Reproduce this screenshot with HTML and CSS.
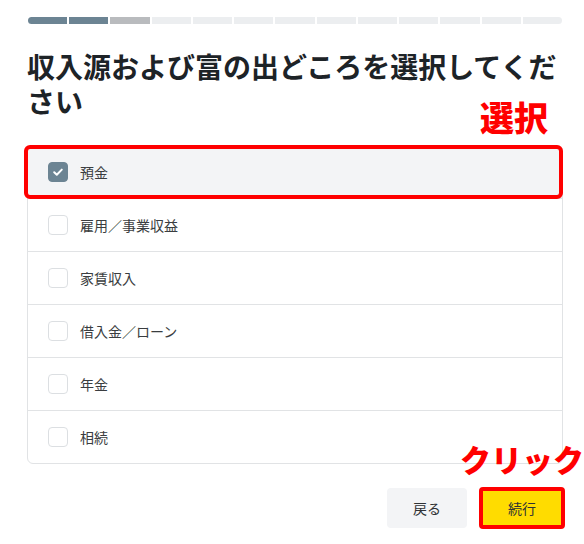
FILE: index.html
```html
<!DOCTYPE html>
<html lang="ja">
<head>
<meta charset="utf-8">
<link rel="stylesheet" href="styles.css">
</head>
<body>
<div class="page">
  <div class="progress">
    <span class="seg done"></span><span class="seg done"></span><span class="seg current"></span><span class="seg"></span><span class="seg"></span><span class="seg"></span><span class="seg"></span><span class="seg"></span><span class="seg"></span><span class="seg"></span><span class="seg"></span><span class="seg"></span><span class="seg"></span>
  </div>
  <h1 class="title">収入源および富の出どころを選択してください</h1>
  <div class="list">
    <label class="row selected">
      <span class="box checked"><svg viewBox="0 0 20 20" width="20" height="20"><path d="M6.2 10.2 L8.8 12.7 L13.8 7.6" fill="none" stroke="#fff" stroke-width="2" stroke-linecap="round" stroke-linejoin="round"/></svg></span>
      <span class="label">預金</span>
    </label>
    <label class="row"><span class="box"></span><span class="label">雇用／事業収益</span></label>
    <label class="row"><span class="box"></span><span class="label">家賃収入</span></label>
    <label class="row"><span class="box"></span><span class="label">借入金／ローン</span></label>
    <label class="row"><span class="box"></span><span class="label">年金</span></label>
    <label class="row"><span class="box"></span><span class="label">相続</span></label>
    <div class="mark mark-row"></div>
  </div>
  <div class="actions">
    <button class="btn back">戻る</button>
    <div class="next-wrap">
      <button class="btn next">続行</button>
      <div class="mark mark-btn"></div>
    </div>
  </div>
  <div class="note note-select">選択</div>
  <div class="note note-click">クリック</div>
</div>
</body>
</html>
```
FILE: styles.css
```css
html, body {
  margin: 0;
  padding: 0;
  background: #ffffff;
}
body {
  font-family: "Noto Sans CJK JP", "Noto Sans", sans-serif;
  color: #2b2f33;
}
.page {
  position: relative;
  width: 584px;
  height: 544px;
  padding: 17px 0 0 27px;
  box-sizing: border-box;
}
.progress {
  display: flex;
  gap: 2px;
  width: 534px;
  margin-left: 1px;
  height: 7px;
  border-radius: 4px;
  overflow: hidden;
}
.seg {
  flex: 1;
  background: #eceef0;
}
.seg.done { background: #6c8493; }
.seg.current { background: #b9bbbe; }
.title {
  margin: 25px 0 0 0;
  width: 536px;
  font-size: 28px;
  line-height: 35px;
  font-weight: 700;
  color: #1d2327;
  letter-spacing: 0;
}
.list {
  position: relative;
  margin-top: 26px;
  width: 536px;
  box-sizing: border-box;
  border: 1px solid #e1e3e5;
  border-radius: 6px;
}
.row {
  display: flex;
  align-items: center;
  gap: 12px;
  height: 52px;
  padding-left: 20px;
  border-top: 1px solid #e1e3e5;
  font-size: 14px;
  color: #3a3d40;
}
.row:first-child { border-top: none; }
.row.selected { background: #f3f4f6; border-radius: 5px 5px 0 0; }
.box {
  width: 20px;
  height: 20px;
  box-sizing: border-box;
  border: 1px solid #dcdfe2;
  border-radius: 4px;
  background: #fff;
  display: flex;
}
.box.checked {
  background: #6c8493;
  border-color: #6c8493;
}
.box.checked svg { margin: -1px; }
.label { line-height: 20px; }
.mark {
  position: absolute;
  border: 4px solid #ff0000;
  border-radius: 6px;
  box-sizing: border-box;
  pointer-events: none;
}
.mark-row {
  left: -4px;
  top: -1px;
  right: -1px;
  height: 54px;
}
.actions {
  display: flex;
  justify-content: flex-end;
  gap: 15px;
  width: 535px;
  margin-top: 24px;
}
.btn {
  width: 80px;
  height: 40px;
  border: none;
  border-radius: 4px;
  font-family: "Noto Sans CJK JP", sans-serif;
  font-size: 14px;
  color: #2f3235;
  padding: 0;
}
.back { background: #f3f4f6; }
.next-wrap { position: relative; }
.next { background: #ffdc00; display: block; }
.mark-btn {
  left: -3px;
  top: -1px;
  right: -3px;
  bottom: -1px;
  border-radius: 4px;
}
.note {
  position: absolute;
  color: #ff0000;
  font-weight: 900;
  line-height: 1;
  white-space: nowrap;
}
.note-select {
  left: 480px;
  top: 100px;
  font-size: 34px;
}
.note-click {
  left: 460px;
  top: 443px;
  font-size: 31px;
}
```
